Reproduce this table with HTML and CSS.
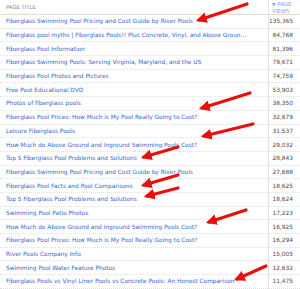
FILE: index.html
```html
<!DOCTYPE html>
<html lang="en">
<head>
    <meta charset="UTF-8">
    <meta name="viewport" content="width=device-width, initial-scale=1.0">
    <title>Top Pages</title>
    <link rel="stylesheet" href="styles.css">
</head>
<body>
    <div class="report">
        <table class="pages">
            <thead>
                <tr>
                    <th class="title-col">Page Title</th>
                    <th class="views-col"><span class="sort">&#9660;</span> Page<br>Views</th>
                </tr>
            </thead>
            <tbody>
                <tr><td><a href="#">Fiberglass Swimming Pool Pricing and Cost Guide by River Pools</a></td><td class="num">135,365</td></tr>
                <tr><td><a href="#">Fiberglass pool myths | Fiberglass Pools!! Plus Concrete, Vinyl, and Above Groun...</a></td><td class="num">84,768</td></tr>
                <tr><td><a href="#">Fiberglass Pool Information</a></td><td class="num">81,396</td></tr>
                <tr><td><a href="#">Fiberglass Swimming Pools: Serving Virginia, Maryland, and the US</a></td><td class="num">79,671</td></tr>
                <tr><td><a href="#">Fiberglass Pool Photos and Pictures</a></td><td class="num">74,759</td></tr>
                <tr><td><a href="#">Free Pool Educational DVD</a></td><td class="num">53,903</td></tr>
                <tr><td><a href="#">Photos of fiberglass pools</a></td><td class="num">38,350</td></tr>
                <tr><td><a href="#">Fiberglass Pool Prices: How Much is My Pool Really Going to Cost?</a></td><td class="num">32,679</td></tr>
                <tr><td><a href="#">Leisure Fiberglass Pools</a></td><td class="num">31,537</td></tr>
                <tr><td><a href="#">How Much do Above Ground and Inground Swimming Pools Cost?</a></td><td class="num">29,032</td></tr>
                <tr><td><a href="#">Top 5 Fiberglass Pool Problems and Solutions</a></td><td class="num">28,843</td></tr>
                <tr><td><a href="#">Fiberglass Swimming Pool Pricing and Cost Guide by River Pools</a></td><td class="num">27,688</td></tr>
                <tr><td><a href="#">Fiberglass Pool Facts and Pool Comparisons</a></td><td class="num">18,625</td></tr>
                <tr><td><a href="#">Top 5 Fiberglass Pool Problems and Solutions</a></td><td class="num">18,624</td></tr>
                <tr><td><a href="#">Swimming Pool Patio Photos</a></td><td class="num">17,223</td></tr>
                <tr><td><a href="#">How Much do Above Ground and Inground Swimming Pools Cost?</a></td><td class="num">16,925</td></tr>
                <tr><td><a href="#">Fiberglass Pool Prices: How Much is My Pool Really Going to Cost?</a></td><td class="num">16,294</td></tr>
                <tr><td><a href="#">River Pools Company Info</a></td><td class="num">15,005</td></tr>
                <tr><td><a href="#">Swimming Pool Water Feature Photos</a></td><td class="num">12,632</td></tr>
                <tr><td><a href="#">Fiberglass Pools vs Vinyl Liner Pools vs Concrete Pools: An Honest Comparison</a></td><td class="num">11,475</td></tr>
            </tbody>
        </table>

        <!-- hand drawn arrows on top of the screenshot -->
        <svg class="arrows" width="300" height="289" viewBox="0 0 300 289">
            <defs>
                <marker id="head" viewBox="0 0 10 10" refX="7" refY="5" markerWidth="3.4" markerHeight="3.4" orient="auto">
                    <path d="M0,0 L10,5 L0,10 z" fill="#e8100c"/>
                </marker>
            </defs>
            <g stroke="#e8100c" stroke-width="3.2" stroke-linecap="round" fill="none" marker-end="url(#head)">
                <line x1="247" y1="4" x2="199" y2="20"/>
                <line x1="250" y1="93" x2="202" y2="108"/>
                <line x1="253" y1="124" x2="204" y2="136"/>
                <line x1="178" y1="147" x2="144" y2="157"/>
                <line x1="178" y1="175" x2="144" y2="185"/>
                <line x1="178" y1="188" x2="147" y2="196"/>
                <line x1="246" y1="210" x2="209" y2="222"/>
                <line x1="266" y1="266" x2="237" y2="279"/>
            </g>
        </svg>
    </div>
</body>
</html>
```

FILE: styles.css
```css
*{
    margin: 0;
    padding: 0;
}
body{
    background: #fff;
    font-family: "DejaVu Sans", Verdana, sans-serif;
}
.report{
    position: relative;
    width: 300px;
    height: 289px;
    overflow: hidden;
}
.pages{
    width: 300px;
    border-collapse: collapse;
    table-layout: fixed;
}
.pages th{
    height: 14px;
    font-weight: normal;
    text-transform: uppercase;
    text-align: left;
    vertical-align: middle;
    border-bottom: 1px solid #eadcc4;
    line-height: 6px;
}
.title-col{
    width: 262px;
    font-size: 5.3px;
    color: #8a8a8a;
    padding-left: 6px;
}
.views-col{
    font-size: 5.4px;
    color: #7fa3da;
    padding-left: 3px;
    border-left: 1px solid #e4e4e4;
}
.sort{
    font-size: 4.6px;
}
.pages td{
    height: 13.7px;
    box-sizing: border-box;
    font-size: 5.85px;
    white-space: nowrap;
    overflow: hidden;
    padding-left: 6px;
    border-bottom: 1px dotted #e2e2e2;
    vertical-align: middle;
}
.pages a{
    color: #3368cc;
    text-decoration: none;
}
.pages td.num{
    text-align: right;
    color: #4d4d4d;
    padding-left: 0;
    padding-right: 7px;
    border-left: 1px solid #e4e4e4;
}
.arrows{
    position: absolute;
    top: 0;
    left: 0;
}
```
